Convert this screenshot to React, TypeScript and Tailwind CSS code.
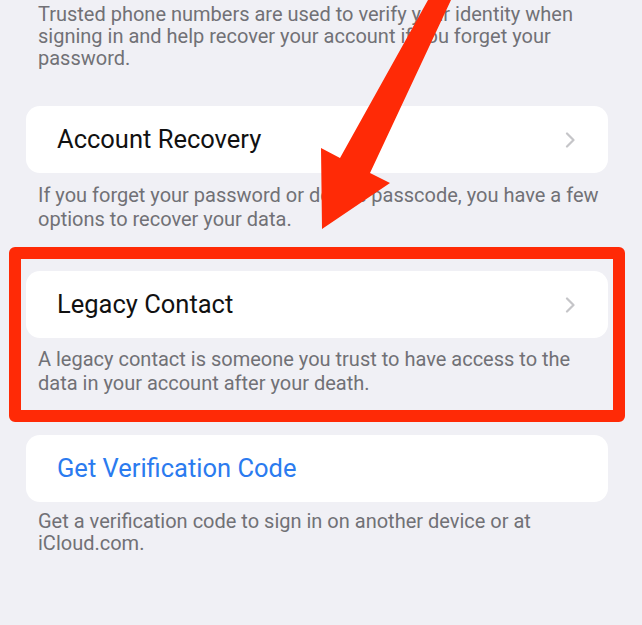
import React from 'react';

const Chevron: React.FC = () => (
  <svg width="11" height="16" viewBox="0 0 11 16" fill="none">
    <path d="M2 1.5L8.5 8L2 14.5" stroke="#c5c5c8" strokeWidth="2.2" strokeLinecap="round" strokeLinejoin="round" />
  </svg>
);

const Row: React.FC<{ title: string; blue?: boolean; chevron?: boolean }> = ({ title, blue, chevron }) => (
  <div className="ml-[26px] w-[582px] h-[67px] bg-white rounded-[14px] flex items-center justify-between pl-[31px] pr-[32px]">
    <span className={`text-[25.5px] ${blue ? 'text-[#2b7bef]' : 'text-[#111111]'}`}>{title}</span>
    {chevron && <Chevron />}
  </div>
);

const App: React.FC = () => {
  return (
    <div className="relative w-[642px] h-[625px] overflow-hidden bg-[#f0f0f5] font-['Roboto',sans-serif]">
      {/* footer of the phone numbers group */}
      <p className="pt-[3px] pl-[38px] text-[20px] leading-[22px] text-[#717176]">
        Trusted phone numbers are used to verify your identity when
        <br />
        signing in and help recover your account if you forget your
        <br />
        password.
      </p>

      <div className="mt-[37px]">
        <Row title="Account Recovery" chevron />
        <p className="pt-[10px] pl-[38px] text-[20px] leading-[24px] text-[#717176]">
          If you forget your password or device passcode, you have a few
          <br />
          options to recover your data.
        </p>
      </div>

      <div className="mt-[40px]">
        <Row title="Legacy Contact" chevron />
        <p className="pt-[9px] pl-[38px] text-[20px] leading-[24px] text-[#717176]">
          A legacy contact is someone you trust to have access to the
          <br />
          data in your account after your death.
        </p>
      </div>

      <div className="mt-[40px]">
        <Row title="Get Verification Code" blue />
        <p className="pt-[8px] pl-[38px] text-[20px] leading-[22px] text-[#717176]">
          Get a verification code to sign in on another device or at
          <br />
          iCloud.com.
        </p>
      </div>

      {/* annotation: red box around Legacy Contact */}
      <div className="absolute left-[9px] top-[247px] w-[616px] h-[175px] border-[12px] border-[#ff2a06] rounded-[6px]" />

      {/* annotation: arrow */}
      <svg className="absolute left-0 top-0" width="642" height="625" viewBox="0 0 642 625">
        <path d="M428 0L451 0L370 173L390 183L322 229L321 148L340 158Z" fill="#ff2a06" />
      </svg>
    </div>
  );
};

export default App;
